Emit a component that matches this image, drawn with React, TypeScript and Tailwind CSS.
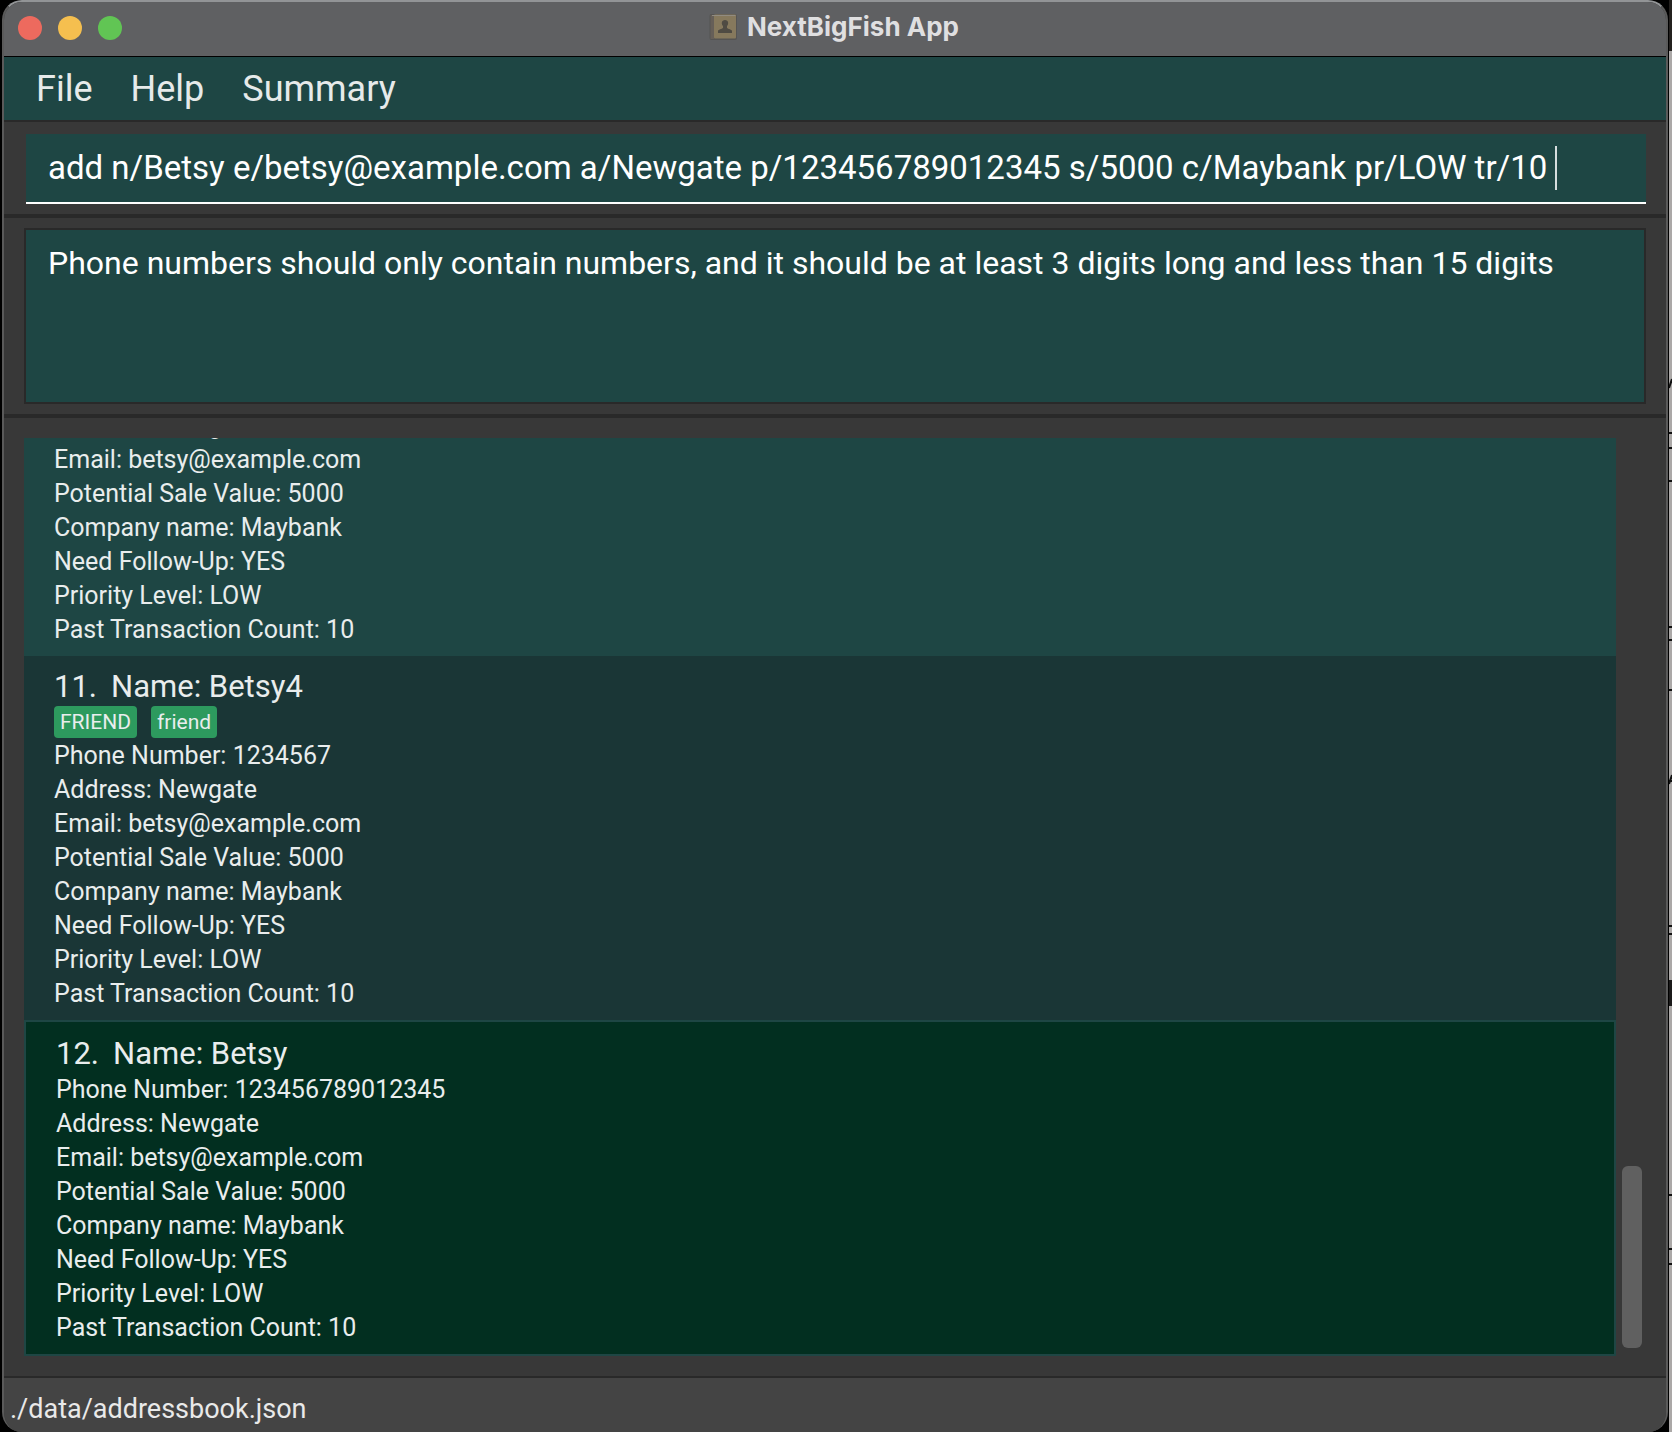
import React from "react";

type Person = {
  index: number;
  name?: string;
  tags: string[];
  phone?: string;
};

/* The first entry is scrolled: only its rows from the address on are rendered. */
const people: Person[] = [
  { index: 10, tags: [] },
  { index: 11, name: "Betsy4", tags: ["FRIEND", "friend"], phone: "1234567" },
  { index: 12, name: "Betsy", tags: [], phone: "123456789012345" },
];

const tones = [
  "bg-[#1e4644] h-[218px] pb-[9px]",
  "bg-[#1a3636] h-[364px] pb-[9px]",
  "bg-[#022f20] h-[336px] pb-[9px] border-2 border-[#1e4644]",
];

function PersonCard({ person, tone }: { person: Person; tone: string }) {
  return (
    <li className={`flex shrink-0 flex-col justify-end overflow-hidden pl-[30px] text-[25px] leading-[34px] text-[#e9eded] ${tone}`}>
      {person.name && (
        <h2 className="flex shrink-0 gap-[14px] text-[31px] leading-[38px]">
          <span>{person.index}.</span>
          <span>Name: {person.name}</span>
        </h2>
      )}
      {person.tags.length > 0 && (
        <div className="mb-px flex shrink-0 gap-[14px]">
          {person.tags.map((tag) => (
            <span key={tag} className="rounded-[4px] bg-[#2d9a5e] px-[6px] text-[21px] leading-[32px]">
              {tag}
            </span>
          ))}
        </div>
      )}
      {person.phone && <p>Phone Number: {person.phone}</p>}
      <p>Address: Newgate</p>
      <p>Email: betsy@example.com</p>
      <p>Potential Sale Value: 5000</p>
      <p>Company name: Maybank</p>
      <p>Need Follow-Up: YES</p>
      <p>Priority Level: LOW</p>
      <p>Past Transaction Count: 10</p>
    </li>
  );
}

function BookIcon() {
  return (
    <svg viewBox="0 0 28 28" className="size-[28px]" aria-hidden="true">
      <rect x="0.500" y="1" width="27.500" height="26" rx="2" fill="#555453" />
      <rect x="5" y="1.500" width="22" height="24" rx="1" fill="#86795d" />
      <rect x="1.500" y="2" width="3.500" height="24" fill="#665f58" />
      <path d="M3 2.500h23.500" stroke="#918b80" />
      <path d="M9 20v-2c0-1.500 4-2 5-3v-2c-2-2-1.500-6 2-6s4 4 2 6v2c1 1 5 1.500 5 3v2z" fill="#4f4b43" />
    </svg>
  );
}

/* Sliver of the document window that shows beside this one. */
function WindowBehind() {
  const marks = [432, 447, 480, 626, 639, 689, 780, 925, 933, 1194, 1248, 1263];
  return (
    <svg viewBox="0 0 3 1432" preserveAspectRatio="none" className="w-[3px] self-stretch" aria-hidden="true">
      <rect width="3" height="51" fill="#24211f" />
      <rect y="51" width="3" height="1381" fill="#aba8a7" />
      <rect y="980" width="3" height="26" fill="#1b1a1a" />
      <path d="M0 388L3 379" stroke="#111" strokeWidth="2" />
      <path d="M0 784L3 775" stroke="#111" strokeWidth="2" />
      {marks.map((y) => (
        <rect key={y} y={y} width="3" height="2" fill="#111" />
      ))}
    </svg>
  );
}

export default function App() {
  return (
    <div className="flex min-h-screen bg-black pl-[2px] font-[Roboto,sans-serif]">
      <main className="mr-px flex min-w-0 flex-1 flex-col overflow-hidden rounded-[20px] border-x-2 border-t-2 border-[#5a5a5a] border-t-[#929496] bg-[#383838]">
        <header className="grid h-[55px] grid-cols-[1fr_auto_1fr] items-center border-b border-black bg-[#5f6062] pb-[2px]">
          <div className="flex gap-[16px] pl-[14px]">
            <button aria-label="Close" className="size-[24px] rounded-full bg-[#ed6a5e]" />
            <button aria-label="Minimize" className="size-[24px] rounded-full bg-[#f5bf4f]" />
            <button aria-label="Zoom" className="size-[24px] rounded-full bg-[#61c554]" />
          </div>
          <h1 className="flex items-center gap-[10px] pb-[2px] pr-[2px] font-[Inter,sans-serif] text-[26px] leading-[32px] font-bold text-[#dfdfe0]">
            <BookIcon />
            NextBigFish App
          </h1>
        </header>
        <nav className="flex h-[65px] items-center gap-[38px] border-b-2 border-[#292929] bg-[#1e4644] pl-[32px] text-[36px] leading-[44px] text-[#e6eaea]">
          <button>File</button>
          <button>Help</button>
          <button>Summary</button>
        </nav>
        <section className="border-b-4 border-[#292929] pb-[10px] pl-[22px] pr-[20px] pt-[12px]">
          <label className="flex h-[70px] items-center border-b-2 border-white bg-[#1e4644] px-[22px] text-[33px]">
            <input
              aria-label="Command"
              defaultValue="add n/Betsy e/betsy@example.com a/Newgate p/123456789012345 s/5000 c/Maybank pr/LOW tr/10 "
              className="max-w-full text-white outline-none [field-sizing:content]"
            />
            <span className="h-[44px] w-[2px] bg-[#d5dddd]" />
          </label>
        </section>
        <section className="border-b-4 border-[#292929] px-[20px] py-[10px]">
          <textarea
            aria-label="Result"
            readOnly
            value="Phone numbers should only contain numbers, and it should be at least 3 digits long and less than 15 digits"
            className="block h-[176px] w-full resize-none border-2 border-[#292929] bg-[#1e4644] px-[22px] py-[12px] text-[32px] leading-[42px] text-white outline-none"
          />
        </section>
        <section className="flex flex-1 gap-[6px] py-[20px] pl-[20px] pr-[24px]">
          <ul className="flex min-w-0 flex-1 flex-col">
            {people.map((person, i) => (
              <PersonCard key={person.index} person={person} tone={tones[i]} />
            ))}
          </ul>
          <div className="flex w-[20px] flex-col justify-end pb-[8px]">
            <div className="h-[182px] rounded-[6px] bg-[#606060]" />
          </div>
        </section>
        <footer className="h-[56px] border-t-2 border-[#292929] bg-[#444444] pl-[6px] pt-[13px] text-[27px] leading-[36px] text-[#e9e9e9]">
          ./data/addressbook.json
        </footer>
      </main>
      <WindowBehind />
    </div>
  );
}
